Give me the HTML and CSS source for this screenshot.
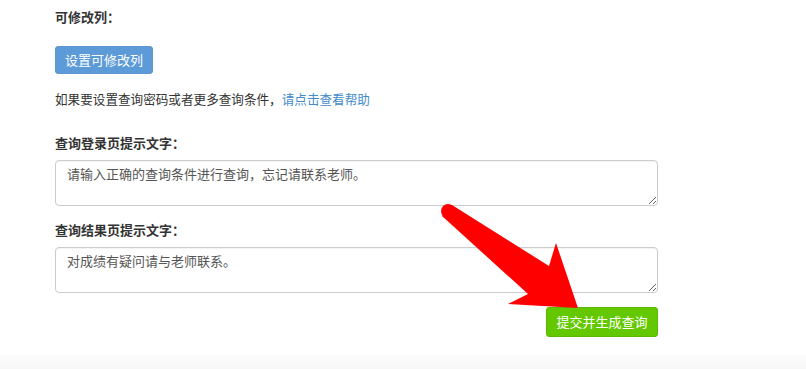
FILE: index.html
```html
<!DOCTYPE html>
<html lang="zh-CN">
<head>
<meta charset="utf-8">
<title>查询设置</title>
<link rel="stylesheet" href="styles.css">
</head>
<body>
<div class="page">
  <div class="form">
    <div class="label first">可修改列：</div>
    <button class="btn btn-blue" type="button">设置可修改列</button>
    <p class="help">如果要设置查询密码或者更多查询条件，<a href="#" class="link">请点击查看帮助</a></p>
    <div class="label gap-lg">查询登录页提示文字：</div>
    <textarea class="area">请输入正确的查询条件进行查询，忘记请联系老师。</textarea>
    <div class="label gap-md">查询结果页提示文字：</div>
    <textarea class="area">对成绩有疑问请与老师联系。</textarea>
    <div class="actions">
      <button class="btn btn-green" type="button">提交并生成查询</button>
    </div>
  </div>
  <div class="footer"></div>
  <svg class="arrow" width="806" height="369" viewBox="0 0 806 369" aria-hidden="true">
    <circle cx="448" cy="211" r="7" fill="#ff0000"/>
    <polygon fill="#ff0000" points="452,205 549,266 556,243 578,308 508,304 528,294 442,216"/>
  </svg>
</div>
</body>
</html>
```
FILE: styles.css
```css
html, body {
  margin: 0;
  padding: 0;
  background: #ffffff;
}
.page {
  position: relative;
  width: 806px;
  height: 369px;
  overflow: hidden;
  font-family: "Noto Sans CJK SC", "Liberation Sans", sans-serif;
  font-size: 13px;
  color: #333333;
}
.form {
  display: flex;
  flex-direction: column;
  align-items: flex-start;
  width: 603px;
  margin-left: 55px;
}
.label {
  font-weight: bold;
  line-height: 20px;
  height: 20px;
  white-space: nowrap;
}
.first { margin-top: 7px; }
.gap-lg { margin-top: 24px; }
.gap-md { margin-top: 14px; }
.btn {
  font-family: inherit;
  font-size: 13px;
  line-height: 18px;
  color: #ffffff;
  border-radius: 3px;
  cursor: pointer;
  white-space: nowrap;
  box-sizing: border-box;
}
.btn-blue {
  margin-top: 19px;
  padding: 4px 9px;
  background: #5c9bd8;
  border: 1px solid #5a97d3;
  height: 28px;
  width: 98px;
}
.help {
  margin: 15px 0 0 0;
  font-size: 12.6px;
  line-height: 20px;
  white-space: nowrap;
}
.link {
  color: #428bca;
  text-decoration: none;
}
.area {
  box-sizing: border-box;
  margin-top: 7px;
  width: 603px;
  height: 46px;
  padding: 4px 11px;
  border: 1px solid #cccccc;
  border-radius: 4px;
  font-family: inherit;
  font-size: 13px;
  line-height: 18px;
  color: #555555;
  background: #ffffff;
  box-shadow: inset 0 1px 1px rgba(0,0,0,0.05);
}
.actions {
  align-self: stretch;
  display: flex;
  justify-content: flex-end;
  margin-top: 14px;
}
.btn-green {
  width: 112px;
  height: 30px;
  padding: 5px 8px;
  background: #64c800;
  border: 1px solid #5cb800;
}
.footer {
  margin-top: 18px;
  height: 14px;
  background: linear-gradient(#fbfbfb, #f7f7f7);
}
.arrow {
  position: absolute;
  left: 0;
  top: 0;
  pointer-events: none;
}
```
